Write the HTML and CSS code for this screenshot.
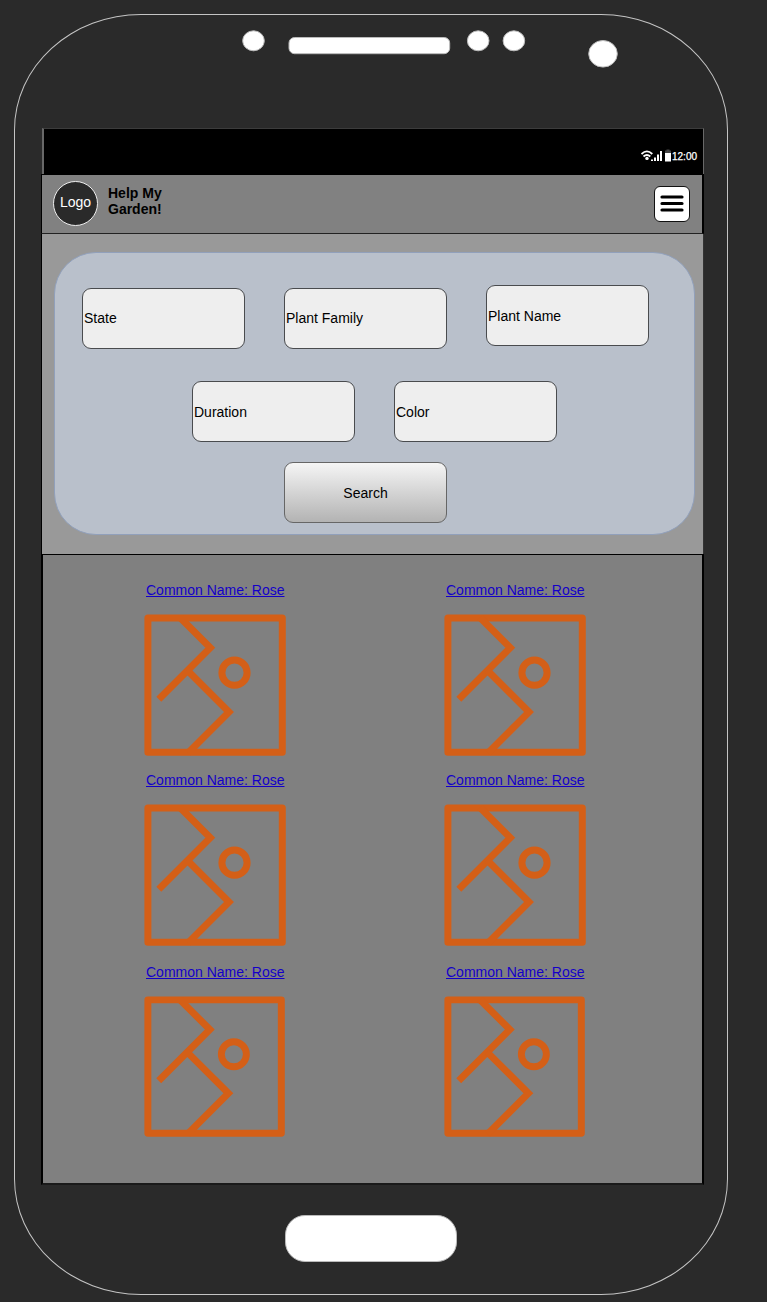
FILE: index.html
```html
<!DOCTYPE html>
<html lang="en">
<head>
<meta charset="utf-8">
<title>Help My Garden!</title>
<link rel="stylesheet" href="styles.css">
</head>
<body>
<svg class="defs" width="0" height="0" aria-hidden="true">
  <symbol id="picture" viewBox="0 0 142 142">
    <g fill="none" stroke="#d45f17" stroke-width="7">
      <rect x="3.9" y="3.9" width="134.4" height="134.4" stroke-linejoin="round"/>
      <path d="M36 3.500 66.300 33.800 14.800 85.300"/>
      <path d="M43 56 85 98 44 139"/>
      <circle cx="90.5" cy="58.7" r="12.6"/>
    </g>
  </symbol>
</svg>
<div class="phone">
  <svg class="sensors" width="712" height="113" viewBox="15 15 712 113">
    <g fill="#fff" stroke="#bbb" stroke-width="1">
      <ellipse cx="253.5" cy="40.8" rx="10.8" ry="10"/>
      <rect x="289" y="37.5" width="160.700" height="16.200" rx="5.5"/>
      <ellipse cx="478.2" cy="40.8" rx="10.8" ry="10"/>
      <ellipse cx="513.9" cy="40.8" rx="10.8" ry="10"/>
      <ellipse cx="603" cy="53.8" rx="14.3" ry="13.3"/>
    </g>
  </svg>
  <div class="screen">
    <div class="status">
      <svg width="31" height="14" viewBox="641 149 31 14">
        <g fill="none" stroke="#fff" stroke-width="1.8">
          <path d="M641.500 154q5.400-5.200 10.800 0"/>
          <path d="M643.5 156.500q3.4-3 6.8 0"/>
        </g>
        <circle cx="647" cy="158.4" r="1.7" fill="#fff"/>
        <path fill="#fff" d="M651 159.5h2v1.5h-2zM654 157.5h2v3.5H654zM657 154.5h2v6.500H657zM660 151h2v10h-2zM665 153h6v8.500h-6z"/>
        <path fill="#444" d="M665 153v-2.500h1.500V149.500h3v1H671V153z"/>
      </svg>
      <span class="clock">12:00</span>
    </div>
    <header class="header">
      <div class="logo">Logo</div>
      <h1 class="title">Help My<br>Garden!</h1>
      <button class="menu" aria-label="Menu">
        <svg width="24" height="18" viewBox="0 0 24 18"><path d="M2 2H22M2 8.500H22M2 15H22" stroke="#000" stroke-width="3.2" stroke-linecap="round"/></svg>
      </button>
    </header>
    <section class="search">
      <div class="panel">
        <div class="row first">
          <div class="field">State</div>
          <div class="field">Plant Family</div>
          <div class="field raised">Plant Name</div>
        </div>
        <div class="row second">
          <div class="field">Duration</div>
          <div class="field">Color</div>
        </div>
        <button class="field submit">Search</button>
      </div>
    </section>
    <main class="results">
      <article class="card"><a href="#">Common Name: Rose</a><svg class="pic"><use href="#picture"/></svg></article>
      <article class="card"><a href="#">Common Name: Rose</a><svg class="pic"><use href="#picture"/></svg></article>
      <article class="card"><a href="#">Common Name: Rose</a><svg class="pic"><use href="#picture"/></svg></article>
      <article class="card"><a href="#">Common Name: Rose</a><svg class="pic"><use href="#picture"/></svg></article>
      <article class="card"><a href="#">Common Name: Rose</a><svg class="pic small"><use href="#picture"/></svg></article>
      <article class="card"><a href="#">Common Name: Rose</a><svg class="pic small"><use href="#picture"/></svg></article>
    </main>
  </div>
  <div class="home"></div>
</div>
</body>
</html>
```
FILE: styles.css
```css
* { box-sizing: border-box; }
body {
  margin: 0;
  height: 1302px;
  padding: 14px 0 0 14px;
  overflow: hidden;
  background: #2a2a2a;
  color: #000;
  font: 14px/16px "Liberation Sans", Arial, sans-serif;
}
svg { display: block; }
.defs { height: 0; }
.phone {
  width: 714.4px;
  height: 1281px;
  border: 1px solid #c4c4c4;
  border-radius: 127px / 116px;
}
.screen { width: 663px; margin-left: 26px; }
.status {
  display: flex;
  justify-content: flex-end;
  height: 46px;
  margin-left: 1px;
  padding: 20px 5px 0 0;
  background: #000;
  border: solid #686868;
  border-width: 1px 1px 0 2px;
  border-top-color: #3c3c3c;
}
.clock {
  width: 26px;
  color: #fff;
  font-size: 10px;
  line-height: 15px;
  -webkit-text-stroke: 0.25px #fff;
}
.header {
  display: flex;
  align-items: flex-start;
  height: 60px;
  padding: 6px 12px 0 11px;
  background: #818181;
  border: solid #000;
  border-width: 1px 2px 1px 1px;
  border-bottom-color: #222;
}
.logo {
  width: 45px;
  height: 45px;
  border: 1px solid #eee;
  border-radius: 50%;
  background: #2a2a2a;
  color: #fff;
  line-height: 41px;
  text-align: center;
}
.title { margin: 4px 0 0 10px; font-size: 14px; line-height: 16px; }
.menu {
  display: grid;
  place-items: center;
  width: 36px;
  height: 36px;
  margin: 5px 0 0 auto;
  padding: 0;
  border: 1px solid #111;
  border-radius: 6px;
  background: #fff;
}
.search {
  height: 320px;
  padding: 18px 0 0 12px;
  background: #999;
  border: solid #000;
  border-width: 0 1px;
  border-right-color: #333;
}
.panel {
  display: flex;
  flex-direction: column;
  align-items: center;
  width: 641px;
  height: 283px;
  padding-top: 35px;
  border: 1px solid #91a0bb;
  border-radius: 42px;
  background: #b9c0cb;
}
.row { display: flex; gap: 39px; }
.row.first { margin-left: -18px; }
.row.second { margin: 32px 0 20px; }
.field {
  display: flex;
  align-items: center;
  width: 163px;
  height: 61px;
  padding: 0 0 0 1px;
  border: 1px solid #494b4e;
  border-radius: 9px;
  background: #eee;
}
.first .field { padding-bottom: 2px; }
.first .raised { margin: -3px 0 3px; padding-bottom: 0; }
.submit {
  justify-content: center;
  margin-left: -18px;
  padding: 0;
  border-color: #666;
  background: linear-gradient(#f5f5f5, #b3b3b3);
  color: #000;
  font: inherit;
}
.results {
  display: grid;
  grid-template-columns: 300px 300px;
  grid-template-rows: 190px 192px 190px;
  height: 631px;
  padding: 27px 0 0 101px;
  background: #808080;
  border: solid #000;
  border-width: 1px 2px 2px;
  border-bottom-color: #1a1a1a;
}
.card a {
  display: block;
  width: 143px;
  padding-left: 2px;
  color: #1400c8;
  text-decoration: underline;
  white-space: nowrap;
}
.pic { width: 142px; height: 142px; margin-top: 16px; }
.pic.small { width: 141px; height: 141px; }
.home {
  width: 172px;
  height: 47px;
  margin: 30px 0 0 270px;
  border: 1px solid #bbb;
  border-radius: 20px;
  background: #fff;
}
```
